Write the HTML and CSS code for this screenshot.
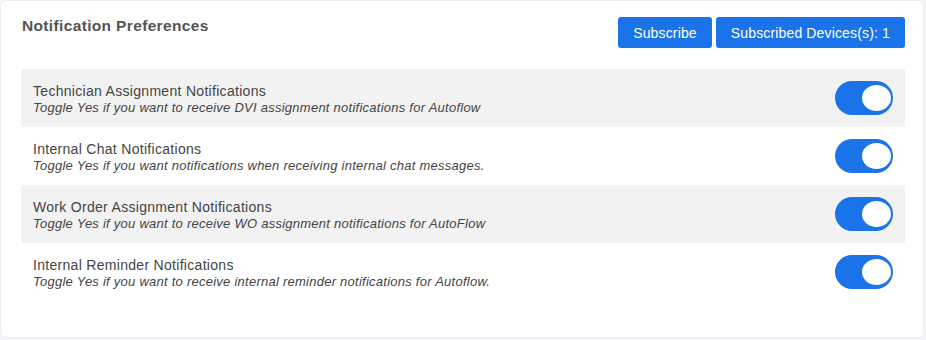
FILE: index.html
```html
<!DOCTYPE html>
<html lang="en">
<head>
<meta charset="UTF-8">
<meta name="viewport" content="width=device-width, initial-scale=1.0">
<title>Notification Preferences</title>
<link rel="stylesheet" href="styles.css">
</head>
<body>
<div class="panel">
  <div class="panel-header">
    <h2>Notification Preferences</h2>
    <div class="actions">
      <button class="btn">Subscribe</button>
      <button class="btn">Subscribed Devices(s): 1</button>
    </div>
  </div>
  <div class="pref-list">
    <div class="pref-row">
      <div class="pref-text">
        <div class="pref-title">Technician Assignment Notifications</div>
        <div class="pref-desc">Toggle Yes if you want to receive DVI assignment notifications for Autoflow</div>
      </div>
      <label class="switch"><input type="checkbox" checked><span class="slider"></span></label>
    </div>
    <div class="pref-row">
      <div class="pref-text">
        <div class="pref-title">Internal Chat Notifications</div>
        <div class="pref-desc">Toggle Yes if you want notifications when receiving internal chat messages.</div>
      </div>
      <label class="switch"><input type="checkbox" checked><span class="slider"></span></label>
    </div>
    <div class="pref-row">
      <div class="pref-text">
        <div class="pref-title">Work Order Assignment Notifications</div>
        <div class="pref-desc">Toggle Yes if you want to receive WO assignment notifications for AutoFlow</div>
      </div>
      <label class="switch"><input type="checkbox" checked><span class="slider"></span></label>
    </div>
    <div class="pref-row">
      <div class="pref-text">
        <div class="pref-title">Internal Reminder Notifications</div>
        <div class="pref-desc">Toggle Yes if you want to receive internal reminder notifications for Autoflow.</div>
      </div>
      <label class="switch"><input type="checkbox" checked><span class="slider"></span></label>
    </div>
  </div>
</div>
</body>
</html>
```

FILE: styles.css
```css
body {
  margin: 0;
  padding: 0;
  background-color: #f3f4f7;
  font-family: "Liberation Sans", Arial, sans-serif;
  color: #444;
}

.panel {
  width: 924px;
  height: 338px;
  background-color: #fff;
  border: 1px solid #eceef2;
  border-radius: 6px;
  box-sizing: border-box;
  padding: 0 18px 0 20px;
}

.panel-header {
  display: flex;
  justify-content: space-between;
  align-items: flex-start;
  height: 68px;
}

.panel-header h2 {
  margin: 16px 0 0 1px;
  font-size: 15.5px;
  font-weight: bold;
  letter-spacing: 0.35px;
  color: #555;
}

.actions {
  display: flex;
  gap: 4px;
  margin-top: 16px;
}

.btn {
  height: 31px;
  padding: 0 15px;
  border: none;
  border-radius: 3px;
  background-color: #1a73e8;
  color: #fff;
  font-family: inherit;
  font-size: 14px;
  letter-spacing: 0.15px;
  cursor: pointer;
}

.pref-row {
  display: flex;
  justify-content: space-between;
  align-items: center;
  height: 58px;
  padding: 0 12px;
}

.pref-row:nth-child(odd) {
  background-color: #f2f2f2;
}

.pref-text {
  padding-top: 2px;
}

.pref-title {
  font-size: 14px;
  letter-spacing: 0.3px;
  color: #444;
  line-height: 18px;
}

.pref-desc {
  font-size: 13px;
  font-style: italic;
  letter-spacing: 0.25px;
  color: #444;
  line-height: 16px;
}

.switch {
  position: relative;
  display: inline-block;
  width: 58px;
  height: 34px;
}

.switch input {
  display: none;
}

.slider {
  position: absolute;
  inset: 0;
  border-radius: 17px;
  background-color: #ccc;
  cursor: pointer;
}

.slider::before {
  content: "";
  position: absolute;
  top: 4px;
  left: 4px;
  width: 29px;
  height: 26px;
  border-radius: 50%;
  background-color: #fff;
}

.switch input:checked + .slider {
  background-color: #1a73e8;
}

.switch input:checked + .slider::before {
  left: 27px;
}
```
